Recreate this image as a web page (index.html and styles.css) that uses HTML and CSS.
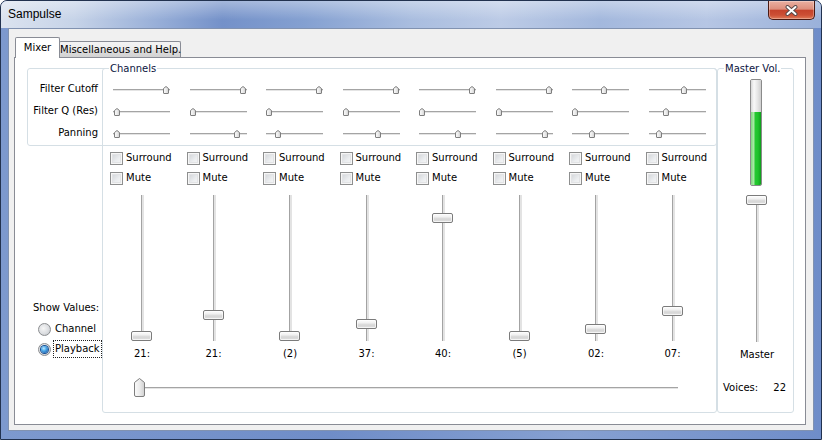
FILE: index.html
```html
<!DOCTYPE html>
<html lang="en">
<head>
<meta charset="utf-8">
<title>Sampulse</title>
<link rel="stylesheet" href="styles.css">
</head>
<body>
<svg class="defs" width="0" height="0" aria-hidden="true">
  <defs>
    <linearGradient id="tg" x1="0" y1="0" x2="1" y2="0">
      <stop offset="0" stop-color="#fbfbfb"/>
      <stop offset="0.5" stop-color="#ececec"/>
      <stop offset="1" stop-color="#cfcfcf"/>
    </linearGradient>
  </defs>
</svg>
<div class="window">
  <div class="titlebar">
    <span class="title">Sampulse</span>
    <button class="close" aria-label="Close">
      <svg width="13" height="11" viewBox="0 0 13 11"><path d="M2.5 2 L10.5 9 M10.5 2 L2.5 9" stroke="#5a4a4a" stroke-width="4" stroke-linecap="round"/><path d="M2.5 2 L10.5 9 M10.5 2 L2.5 9" stroke="#fff" stroke-width="2" stroke-linecap="round"/></svg>
    </button>
  </div>
  <div class="client">
    <div class="tabs">
      <div class="tab active">Mixer</div>
      <div class="tab">Miscellaneous and Help.</div>
    </div>
    <div class="page">
      <div class="boxA">
        <div class="flabel">Filter Cutoff</div>
        <div class="hs"><svg class="ht" style="left:50px" width="6" height="8" viewBox="0 0 6 8"><path d="M.5 2.5 L3 .5 L5.5 2.5 V7 Q5.5 7.5 5 7.5 H1 Q.5 7.5 .5 7 Z"/></svg></div>
        <div class="hs"><svg class="ht" style="left:50px" width="6" height="8" viewBox="0 0 6 8"><path d="M.5 2.5 L3 .5 L5.5 2.5 V7 Q5.5 7.5 5 7.5 H1 Q.5 7.5 .5 7 Z"/></svg></div>
        <div class="hs"><svg class="ht" style="left:50px" width="6" height="8" viewBox="0 0 6 8"><path d="M.5 2.5 L3 .5 L5.5 2.5 V7 Q5.5 7.5 5 7.5 H1 Q.5 7.5 .5 7 Z"/></svg></div>
        <div class="hs"><svg class="ht" style="left:50px" width="6" height="8" viewBox="0 0 6 8"><path d="M.5 2.5 L3 .5 L5.5 2.5 V7 Q5.5 7.5 5 7.5 H1 Q.5 7.5 .5 7 Z"/></svg></div>
        <div class="hs"><svg class="ht" style="left:50px" width="6" height="8" viewBox="0 0 6 8"><path d="M.5 2.5 L3 .5 L5.5 2.5 V7 Q5.5 7.5 5 7.5 H1 Q.5 7.5 .5 7 Z"/></svg></div>
        <div class="hs"><svg class="ht" style="left:50px" width="6" height="8" viewBox="0 0 6 8"><path d="M.5 2.5 L3 .5 L5.5 2.5 V7 Q5.5 7.5 5 7.5 H1 Q.5 7.5 .5 7 Z"/></svg></div>
        <div class="hs"><svg class="ht" style="left:29px" width="6" height="8" viewBox="0 0 6 8"><path d="M.5 2.5 L3 .5 L5.5 2.5 V7 Q5.5 7.5 5 7.5 H1 Q.5 7.5 .5 7 Z"/></svg></div>
        <div class="hs"><svg class="ht" style="left:32px" width="6" height="8" viewBox="0 0 6 8"><path d="M.5 2.5 L3 .5 L5.5 2.5 V7 Q5.5 7.5 5 7.5 H1 Q.5 7.5 .5 7 Z"/></svg></div>

        <div class="flabel">Filter Q (Res)</div>
        <div class="hs"><svg class="ht" style="left:1px" width="6" height="8" viewBox="0 0 6 8"><path d="M.5 2.5 L3 .5 L5.5 2.5 V7 Q5.5 7.5 5 7.5 H1 Q.5 7.5 .5 7 Z"/></svg></div>
        <div class="hs"><svg class="ht" style="left:0px" width="6" height="8" viewBox="0 0 6 8"><path d="M.5 2.5 L3 .5 L5.5 2.5 V7 Q5.5 7.5 5 7.5 H1 Q.5 7.5 .5 7 Z"/></svg></div>
        <div class="hs"><svg class="ht" style="left:0px" width="6" height="8" viewBox="0 0 6 8"><path d="M.5 2.5 L3 .5 L5.5 2.5 V7 Q5.5 7.5 5 7.5 H1 Q.5 7.5 .5 7 Z"/></svg></div>
        <div class="hs"><svg class="ht" style="left:0px" width="6" height="8" viewBox="0 0 6 8"><path d="M.5 2.5 L3 .5 L5.5 2.5 V7 Q5.5 7.5 5 7.5 H1 Q.5 7.5 .5 7 Z"/></svg></div>
        <div class="hs"><svg class="ht" style="left:0px" width="6" height="8" viewBox="0 0 6 8"><path d="M.5 2.5 L3 .5 L5.5 2.5 V7 Q5.5 7.5 5 7.5 H1 Q.5 7.5 .5 7 Z"/></svg></div>
        <div class="hs"><svg class="ht" style="left:0px" width="6" height="8" viewBox="0 0 6 8"><path d="M.5 2.5 L3 .5 L5.5 2.5 V7 Q5.5 7.5 5 7.5 H1 Q.5 7.5 .5 7 Z"/></svg></div>
        <div class="hs"><svg class="ht" style="left:0px" width="6" height="8" viewBox="0 0 6 8"><path d="M.5 2.5 L3 .5 L5.5 2.5 V7 Q5.5 7.5 5 7.5 H1 Q.5 7.5 .5 7 Z"/></svg></div>
        <div class="hs"><svg class="ht" style="left:14px" width="6" height="8" viewBox="0 0 6 8"><path d="M.5 2.5 L3 .5 L5.5 2.5 V7 Q5.5 7.5 5 7.5 H1 Q.5 7.5 .5 7 Z"/></svg></div>

        <div class="flabel">Panning</div>
        <div class="hs"><svg class="ht" style="left:1px" width="6" height="8" viewBox="0 0 6 8"><path d="M.5 2.5 L3 .5 L5.5 2.5 V7 Q5.5 7.5 5 7.5 H1 Q.5 7.5 .5 7 Z"/></svg></div>
        <div class="hs"><svg class="ht" style="left:44px" width="6" height="8" viewBox="0 0 6 8"><path d="M.5 2.5 L3 .5 L5.5 2.5 V7 Q5.5 7.5 5 7.5 H1 Q.5 7.5 .5 7 Z"/></svg></div>
        <div class="hs"><svg class="ht" style="left:9px" width="6" height="8" viewBox="0 0 6 8"><path d="M.5 2.5 L3 .5 L5.5 2.5 V7 Q5.5 7.5 5 7.5 H1 Q.5 7.5 .5 7 Z"/></svg></div>
        <div class="hs"><svg class="ht" style="left:32px" width="6" height="8" viewBox="0 0 6 8"><path d="M.5 2.5 L3 .5 L5.5 2.5 V7 Q5.5 7.5 5 7.5 H1 Q.5 7.5 .5 7 Z"/></svg></div>
        <div class="hs"><svg class="ht" style="left:36px" width="6" height="8" viewBox="0 0 6 8"><path d="M.5 2.5 L3 .5 L5.5 2.5 V7 Q5.5 7.5 5 7.5 H1 Q.5 7.5 .5 7 Z"/></svg></div>
        <div class="hs"><svg class="ht" style="left:46px" width="6" height="8" viewBox="0 0 6 8"><path d="M.5 2.5 L3 .5 L5.5 2.5 V7 Q5.5 7.5 5 7.5 H1 Q.5 7.5 .5 7 Z"/></svg></div>
        <div class="hs"><svg class="ht" style="left:17px" width="6" height="8" viewBox="0 0 6 8"><path d="M.5 2.5 L3 .5 L5.5 2.5 V7 Q5.5 7.5 5 7.5 H1 Q.5 7.5 .5 7 Z"/></svg></div>
        <div class="hs"><svg class="ht" style="left:7px" width="6" height="8" viewBox="0 0 6 8"><path d="M.5 2.5 L3 .5 L5.5 2.5 V7 Q5.5 7.5 5 7.5 H1 Q.5 7.5 .5 7 Z"/></svg></div>
      </div>

      <div class="boxB">
        <div class="legend">Channels</div>
        <div class="channels">
          <div class="ch">
            <label class="cb"><span class="box"></span>Surround</label>
            <label class="cb"><span class="box"></span>Mute</label>
            <div class="vwrap first"><div class="vs"><span class="vthumb" style="top:136px"></span></div><div class="val">21:</div></div>
          </div>
          <div class="ch">
            <label class="cb"><span class="box"></span>Surround</label>
            <label class="cb"><span class="box"></span>Mute</label>
            <div class="vwrap"><div class="vs"><span class="vthumb" style="top:115px"></span></div><div class="val">21:</div></div>
          </div>
          <div class="ch">
            <label class="cb"><span class="box"></span>Surround</label>
            <label class="cb"><span class="box"></span>Mute</label>
            <div class="vwrap"><div class="vs"><span class="vthumb" style="top:136px"></span></div><div class="val">(2)</div></div>
          </div>
          <div class="ch">
            <label class="cb"><span class="box"></span>Surround</label>
            <label class="cb"><span class="box"></span>Mute</label>
            <div class="vwrap"><div class="vs"><span class="vthumb" style="top:124px"></span></div><div class="val">37:</div></div>
          </div>
          <div class="ch">
            <label class="cb"><span class="box"></span>Surround</label>
            <label class="cb"><span class="box"></span>Mute</label>
            <div class="vwrap"><div class="vs"><span class="vthumb" style="top:18px"></span></div><div class="val">40:</div></div>
          </div>
          <div class="ch">
            <label class="cb"><span class="box"></span>Surround</label>
            <label class="cb"><span class="box"></span>Mute</label>
            <div class="vwrap"><div class="vs"><span class="vthumb" style="top:136px"></span></div><div class="val">(5)</div></div>
          </div>
          <div class="ch">
            <label class="cb"><span class="box"></span>Surround</label>
            <label class="cb"><span class="box"></span>Mute</label>
            <div class="vwrap"><div class="vs"><span class="vthumb" style="top:129px"></span></div><div class="val">02:</div></div>
          </div>
          <div class="ch">
            <label class="cb"><span class="box"></span>Surround</label>
            <label class="cb"><span class="box"></span>Mute</label>
            <div class="vwrap"><div class="vs"><span class="vthumb" style="top:111px"></span></div><div class="val">07:</div></div>
          </div>
        </div>
        <div class="big">
          <svg class="bthumb" width="11" height="19" viewBox="0 0 11 19"><path d="M.5 4.5 L5.5 .5 L10.5 4.5 V17 Q10.5 18.5 9 18.5 H2 Q.5 18.5 .5 17 Z"/></svg>
        </div>
      </div>

      <div class="left">
        <div class="sv">Show Values:</div>
        <label class="radio"><span class="rb"></span><span class="rtext">Channel</span></label>
        <label class="radio"><span class="rb on"><span class="dot"></span></span><span class="rtext focus">Playback</span></label>
      </div>

      <div class="master">
        <div class="legend">Master Vol.</div>
        <div class="vu"><div class="vu-empty"></div><div class="vu-fill"></div></div>
        <div class="mwrap">
          <div class="vs mvs"><span class="vthumb" style="top:0px"></span></div>
          <div class="val">Master</div>
        </div>
        <div class="voices"><span>Voices:</span><span>22</span></div>
      </div>
    </div>
  </div>
</div>
</body>
</html>
```

FILE: styles.css
```css
* { box-sizing: border-box; margin: 0; padding: 0; }
html, body { width: 822px; height: 440px; overflow: hidden; }
body {
  font: 10px/14px "DejaVu Sans", Verdana, sans-serif;
  color: #000;
  background: #fff;
}
.defs { position: absolute; width: 0; height: 0; overflow: hidden; }

.window {
  width: 822px;
  height: 440px;
  border: 1px solid #22324f;
  border-radius: 7px 7px 0 0;
  background: linear-gradient(90deg, #7d99ce, #6f8dc8 40%, #86a0d1 70%, #6f8dc9);
  display: flex;
  flex-direction: column;
  overflow: hidden;
}

.titlebar {
  height: 27px;
  flex: none;
  display: flex;
  justify-content: space-between;
  align-items: flex-start;
  padding: 0 6px 0 7px;
  background:
    linear-gradient(180deg, rgba(255,255,255,.35), rgba(255,255,255,0) 70%),
    linear-gradient(90deg, #dbe3ef 0%, #c6d3e8 9%, #98afd8 19%, #7491c9 27%, #84a0d1 37%, #a9bddf 50%, #bccbe6 61%, #a3b8dd 73%, #b6c6e4 86%, #9ab1da 100%);
}
.title {
  font: 12px/27px "Liberation Sans", Arial, sans-serif;
  color: #000;
}
.close {
  width: 47px;
  height: 19px;
  border: 1px solid #4a1a12;
  border-top: none;
  border-radius: 0 0 5px 5px;
  background: linear-gradient(180deg, #eab0a2 0%, #dd8e7c 45%, #c5432c 52%, #cc4f35 78%, #df7a58 100%);
  box-shadow: inset 0 0 0 1px rgba(255,255,255,.3);
  display: flex;
  align-items: center;
  justify-content: center;
  padding: 0;
}

.client {
  flex: 1;
  margin: 0 7px 8px 7px;
  background: #f0f0f0;
  border: 1px solid #8192b0;
  padding: 8px 7px 0 5px;
  display: flex;
  flex-direction: column;
}

.tabs {
  display: flex;
  align-items: flex-end;
  height: 20px;
  padding-left: 1px;
}
.tab {
  height: 16px;
  width: 122px;
  border: 1px solid #898c95;
  border-bottom: none;
  border-radius: 2px 2px 0 0;
  background: linear-gradient(180deg, #f4f4f4, #ececec 50%, #dedede 52%, #d2d2d2);
  line-height: 15px;
  text-align: center;
  white-space: nowrap;
}
.tab.active {
  height: 21px;
  width: 45px;
  margin-bottom: -1px;
  margin-right: -1px;
  background: #fff;
  line-height: 19px;
  position: relative;
  z-index: 1;
}

.page {
  height: 368px;
  border: 1px solid #898c95;
  background: #fff;
  display: grid;
  grid-template-columns: 75px 615px 77px;
  grid-template-rows: 78px 267px;
  padding: 10px 0 0 12px;
}

.boxA {
  grid-column: 1 / 3;
  grid-row: 1;
  border: 1px solid #d5dfe5;
  border-radius: 3px;
  display: grid;
  grid-template-columns: 85px repeat(7, 76.5px) 57px;
  grid-template-rows: repeat(3, 22px);
  padding-top: 9px;
}
.flabel {
  text-align: right;
  padding-right: 15px;
  line-height: 22px;
  white-space: nowrap;
}
.hs {
  position: relative;
  width: 57px;
  height: 22px;
  background:
    linear-gradient(#a4a4a4, #a4a4a4) 0 11px / 100% 1px no-repeat,
    linear-gradient(#e4e4e4, #e4e4e4) 0 12px / 100% 1px no-repeat;
}
.ht {
  position: absolute;
  top: 8px;
  display: block;
}
.ht path, .bthumb path {
  fill: url(#tg);
  stroke: #7e7e7e;
  stroke-width: 1;
}

.boxB {
  grid-column: 2;
  grid-row: 1 / 3;
  border: 1px solid #d5dfe5;
  border-radius: 3px;
}
.legend {
  margin: -7px 0 0 6px;
  padding: 0 1px;
  background: #fff;
  width: max-content;
  line-height: 13px;
  color: #0c1541;
  position: relative;
  z-index: 1;
}
.channels {
  display: grid;
  grid-template-columns: repeat(8, 76.5px);
  margin: 73px 0 0 7px;
}
.ch {
  display: flex;
  flex-direction: column;
}
.cb {
  display: flex;
  align-items: center;
  height: 20px;
  white-space: nowrap;
}
.box {
  flex: none;
  width: 13px;
  height: 13px;
  margin-right: 3px;
  border: 1px solid #8e8f8f;
  background: linear-gradient(135deg, #cdd0d4, #eceef0 60%, #f7f7f7);
  box-shadow: inset 0 0 0 1px #f6f6f6, inset 0 0 0 2px #e2e3e5;
}
.vwrap {
  width: 22px;
  margin: 7px 0 0 16px;
  display: flex;
  flex-direction: column;
  align-items: center;
}
.vwrap.first { margin-left: 21px; }
.vs {
  position: relative;
  width: 22px;
  height: 146px;
  background:
    linear-gradient(#a3a3a3, #a3a3a3) 10px 0 / 1px 100% no-repeat,
    linear-gradient(#e3e3e3, #e3e3e3) 11px 0 / 2px 100% no-repeat;
}
.vthumb {
  position: absolute;
  left: 0;
  width: 21px;
  height: 10px;
  border: 1px solid #7b7b7b;
  border-radius: 2px;
  background: linear-gradient(180deg, #fdfdfd 0%, #f1f1f1 35%, #dcdcdc 55%, #d6d6d6 75%, #e9e9e9 100%);
  box-shadow: inset 0 0 0 1px rgba(255,255,255,.6);
}
.val {
  margin-top: 6px;
  line-height: 14px;
  white-space: nowrap;
}

.big {
  position: relative;
  width: 546px;
  height: 19px;
  margin: 17px 0 0 30px;
  background:
    linear-gradient(#a4a4a4, #a4a4a4) 3px 9px / 542px 1px no-repeat,
    linear-gradient(#e4e4e4, #e4e4e4) 3px 10px / 542px 1px no-repeat;
}
.bthumb {
  position: absolute;
  left: 1px;
  top: 0;
  display: block;
}

.left {
  grid-column: 1;
  grid-row: 2;
  padding: 155px 0 0 6px;
}
.sv { line-height: 14px; margin-bottom: 4px; white-space: nowrap; }
.radio {
  display: flex;
  align-items: center;
  height: 20px;
  margin-left: 5px;
}
.rb {
  flex: none;
  width: 13px;
  height: 13px;
  border-radius: 50%;
  border: 1px solid #8b8d90;
  background: radial-gradient(circle at 40% 40%, #f6f6f6 0%, #dcdee1 55%, #c9ccd0 80%, #eeeeee 100%);
  display: flex;
  align-items: center;
  justify-content: center;
}
.dot {
  width: 7px;
  height: 7px;
  border-radius: 50%;
  background: radial-gradient(circle at 40% 35%, #bfe9ff 0%, #4aa7e8 40%, #1b5fae 85%);
  box-shadow: 0 0 0 1px #174f93;
}
.rtext {
  margin-left: 2px;
  padding: 1px;
  border: 1px dotted transparent;
  line-height: 14px;
  white-space: nowrap;
}
.rtext.focus { border-color: #222; }

.master {
  grid-column: 3;
  grid-row: 1 / 3;
  border: 1px solid #d5dfe5;
  border-radius: 3px;
  display: flex;
  flex-direction: column;
}
.vu {
  width: 12px;
  height: 107px;
  margin: 4px 0 0 32px;
  border: 1px solid #8a8a8a;
  border-radius: 2px;
  display: flex;
  flex-direction: column;
  overflow: hidden;
}
.vu-empty {
  height: 32px;
  background: linear-gradient(90deg, #d8d8d8, #f8f8f8 30%, #e6e6e6 65%, #cfcfcf);
}
.vu-fill {
  flex: 1;
  background: linear-gradient(90deg, #7fd87f 0%, #a6e9a3 25%, #25c831 45%, #1fc22b 70%, #0e9d1b 100%);
}
.mwrap {
  width: 22px;
  margin: 9px 0 0 28px;
  display: flex;
  flex-direction: column;
  align-items: center;
}
.mvs { height: 147px; }
.voices {
  display: flex;
  justify-content: space-between;
  margin-top: 19px;
  padding: 0 7px 0 5px;
  line-height: 14px;
}
```
